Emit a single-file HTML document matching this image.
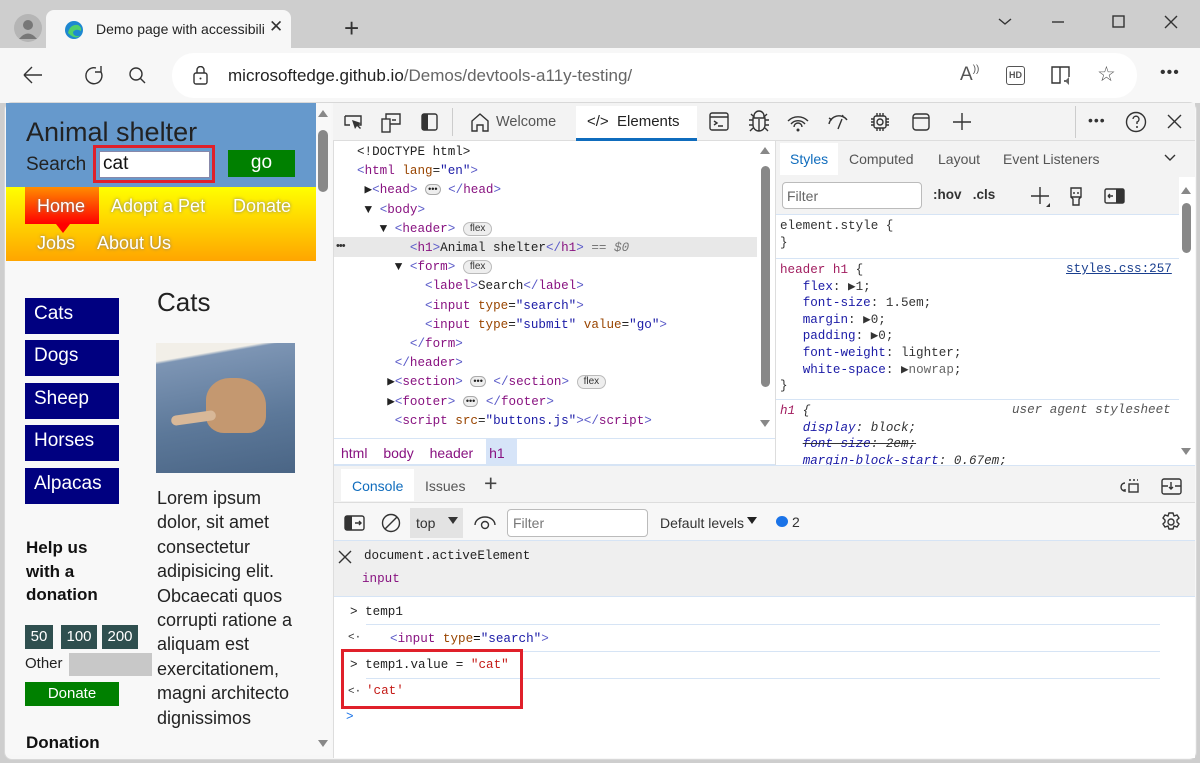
<!DOCTYPE html>
<html><head><meta charset="utf-8"><style>
*{box-sizing:border-box;margin:0;padding:0}
body{width:1200px;height:763px;overflow:hidden;background:#cecece;font-family:"Liberation Sans",sans-serif;position:relative}
.a{position:absolute}
.m{font-family:"Liberation Mono",monospace;font-size:12.6px;white-space:pre}
.tg{color:#881280}.an{color:#994500}.av{color:#1a1aa6}.br{color:#5a5ac8}
.pill{display:inline-block;border:1px solid #bbb;border-radius:8px;background:#eee;font-size:10px;padding:0 6px;line-height:12px;color:#333;vertical-align:1px;font-family:"Liberation Sans",sans-serif}
.dots{display:inline-block;border:1px solid #aaa;border-radius:6px;background:#eee;font-size:9px;line-height:9px;padding:0 2px;vertical-align:1px;font-family:"Liberation Sans",sans-serif}
.nav{color:#fff;font-size:18px;text-shadow:0 0 3px #777}
.side{left:19px;width:94px;height:36px;background:#000080;color:#fff;font-size:19px;padding:5px 9px}
.ic{stroke:#333;fill:none;stroke-width:1.4}
.sp{color:#1a1aa6}
</style></head><body>
<!-- title bar -->
<div class="a" style="left:14px;top:14px;width:28px;height:28px;border-radius:50%;background:#b5b5b5"></div>
<svg class="a" style="left:14px;top:14px" width="28" height="28"><circle cx="14" cy="11" r="5" fill="#777"/><path d="M5 25 Q14 14 23 25Z" fill="#777"/></svg>
<div class="a" style="left:46px;top:10px;width:245px;height:40px;background:#f7f7f7;border-radius:8px 8px 0 0"></div>
<svg class="a" style="left:64px;top:20px" width="20" height="20"><circle cx="10" cy="10" r="9" fill="#1e88d0"/><path d="M4 13 Q6 4 14 5 Q18 7 17 11 Q12 8 9 12 Q9 17 16 16 Q11 20 4 13Z" fill="#4fd06a"/></svg>
<div class="a" style="left:96px;top:21px;font-size:14px;color:#222;white-space:nowrap;width:168px;overflow:hidden">Demo page with accessibility issues</div>
<div class="a" style="left:269px;top:17px;font-size:17px;color:#333">✕</div>
<div class="a" style="left:344px;top:13px;font-size:26px;color:#333;font-weight:300">+</div>
<svg class="a" style="left:995px;top:12px" width="190" height="20"><path d="M4 7l6 5 6-5" class="ic"/><path d="M57 10h12" class="ic"/><rect x="118" y="4" width="11" height="11" class="ic"/><path d="M170 4l12 12M182 4l-12 12" class="ic"/></svg>
<!-- toolbar -->
<div class="a" style="left:0;top:48px;width:1200px;height:55px;background:#f7f7f7"></div>
<svg class="a" style="left:20px;top:62px" width="140" height="28"><path d="M4 13h18M4 13l8-8M4 13l8 8" class="ic" stroke-width="1.6"/><path d="M76 6a8 8 0 1 0 5 4M81 4v6h-6" class="ic" stroke-width="1.6"/><circle cx="116" cy="12" r="6" class="ic" stroke-width="1.6"/><path d="M120 16l5 5" class="ic" stroke-width="1.6"/></svg>
<div class="a" style="left:172px;top:53px;width:965px;height:45px;background:#fff;border-radius:22px"></div>
<svg class="a" style="left:192px;top:66px" width="18" height="20"><rect x="2" y="7" width="13" height="11" rx="2" class="ic"/><path d="M5 7V4a3.5 3.5 0 0 1 7 0v3" class="ic"/><circle cx="8.5" cy="12.5" r="1" fill="#333"/></svg>
<div class="a" style="left:228px;top:66px;font-size:17px;color:#222">microsoftedge.github.io<span style="color:#666">/Demos/devtools-a11y-testing/</span></div>
<div class="a" style="left:960px;top:64px;font-size:19px;color:#555">A<span style="font-size:10px;vertical-align:8px">))</span></div>
<div class="a" style="left:1006px;top:66px;width:19px;height:19px;border:1.5px solid #555;border-radius:3px;font-size:9px;font-weight:bold;color:#555;text-align:center;line-height:16px">HD</div>
<svg class="a" style="left:1050px;top:64px" width="24" height="22"><path d="M2 3h8v16H2zM10 3h9v10" class="ic" stroke="#666"/><path d="M14 16h2l3-3v8l-3-3h-2z" fill="#666"/></svg>
<div class="a" style="left:1097px;top:62px;font-size:21px;color:#555">☆</div>
<div class="a" style="left:1160px;top:64px;font-size:16px;color:#333;letter-spacing:1px">•••</div>
<!-- content frame -->
<div class="a" style="left:4px;top:102px;width:1193px;height:658px;background:#f7f7f7;border-radius:8px;border:1px solid #d8d8d8"></div>
<!-- webpage -->
<div class="a" style="left:6px;top:103px;width:310px;height:652px;background:#f8f8f8;overflow:hidden">
 <div class="a" style="left:0;top:0;width:310px;height:84px;background:#6699cc"></div>
 <div class="a" style="left:20px;top:14px;font-size:27px;color:#222;font-weight:300">Animal shelter</div>
 <div class="a" style="left:20px;top:51px;font-size:19px;color:#222">Search</div>
 <div class="a" style="left:87px;top:42px;width:122px;height:38px;border:3px solid #e0202a"></div>
 <div class="a" style="left:93px;top:48px;width:111px;height:27px;background:#fff;border:1px solid #88a;font-size:19px;padding:1px 3px;color:#111">cat</div>
 <div class="a" style="left:222px;top:47px;width:67px;height:27px;background:#008000;color:#fff;font-size:19px;text-align:center;line-height:25px">go</div>
 <div class="a" style="left:0;top:84px;width:310px;height:74px;background:linear-gradient(#ffff00,#ffa500)"></div>
 <div class="a" style="left:19px;top:84px;width:74px;height:37px;background:linear-gradient(#ff8c00,#ff0000)"></div>
 <div class="a" style="left:50px;top:121px;width:0;height:0;border-left:7px solid transparent;border-right:7px solid transparent;border-top:9px solid #ff0000"></div>
 <div class="a nav" style="left:31px;top:93px">Home</div>
 <div class="a nav" style="left:105px;top:93px">Adopt a Pet</div>
 <div class="a nav" style="left:227px;top:93px">Donate</div>
 <div class="a nav" style="left:31px;top:130px">Jobs</div>
 <div class="a nav" style="left:91px;top:130px">About Us</div>
 <div class="a" style="left:151px;top:184px;font-size:26px;color:#222;font-weight:300">Cats</div>
 <div class="a side" style="top:195px">Cats</div>
 <div class="a side" style="top:237px">Dogs</div>
 <div class="a side" style="top:280px">Sheep</div>
 <div class="a side" style="top:322px">Horses</div>
 <div class="a side" style="top:365px">Alpacas</div>
 <div class="a" style="left:150px;top:240px;width:139px;height:130px;background:linear-gradient(170deg,#f2efe8 0,#f2efe8 12%,#7d95b4 14%,#5c7899 60%,#4a6585)"></div>
 <div class="a" style="left:200px;top:275px;width:60px;height:55px;background:#c49870;border-radius:40% 50% 30% 30%"></div>
 <div class="a" style="left:165px;top:310px;width:45px;height:10px;background:#d8b898;border-radius:6px;transform:rotate(-8deg)"></div>
 <div class="a" style="left:151px;top:383px;font-size:18px;color:#222;line-height:24.4px;width:138px">Lorem ipsum dolor, sit amet consectetur adipisicing elit. Obcaecati quos corrupti ratione a aliquam est exercitationem, magni architecto dignissimos</div>
 <div class="a" style="left:20px;top:433px;font-size:17px;font-weight:bold;color:#111;line-height:23.5px">Help us<br>with a<br>donation</div>
 <div class="a" style="left:19px;top:522px;width:28px;height:24px;background:#2f4f4f;color:#fff;font-size:15px;text-align:center;line-height:24px">50</div>
 <div class="a" style="left:55px;top:522px;width:36px;height:24px;background:#2f4f4f;color:#fff;font-size:15px;text-align:center;line-height:24px">100</div>
 <div class="a" style="left:96px;top:522px;width:36px;height:24px;background:#2f4f4f;color:#fff;font-size:15px;text-align:center;line-height:24px">200</div>
 <div class="a" style="left:19px;top:552px;font-size:15px;color:#222">Other</div>
 <div class="a" style="left:63px;top:550px;width:83px;height:23px;background:#c8c8c8"></div>
 <div class="a" style="left:19px;top:579px;width:94px;height:24px;background:#008000;color:#fff;font-size:15px;text-align:center;line-height:24px">Donate</div>
 <div class="a" style="left:20px;top:630px;font-size:17px;font-weight:bold;color:#111">Donation</div>
</div>
<!-- page scrollbar -->
<div class="a" style="left:316px;top:103px;width:15px;height:652px;background:#f8f8f8"></div>
<div class="a" style="left:318px;top:130px;width:10px;height:62px;background:#888;border-radius:5px"></div>
<div class="a" style="left:318px;top:110px;border-left:5px solid transparent;border-right:5px solid transparent;border-bottom:7px solid #888"></div>
<div class="a" style="left:318px;top:740px;border-left:5px solid transparent;border-right:5px solid transparent;border-top:7px solid #888"></div>
<!-- devtools -->
<div class="a" style="left:333px;top:103px;width:862px;height:655px;background:#fff;border-left:1px solid #ddd"></div>
<div class="a" style="left:333px;top:103px;width:862px;height:38px;background:#f3f3f3;border-bottom:1px solid #ddd"></div>
<svg class="a" style="left:342px;top:110px" width="110" height="26"><path d="M3 6h16v9h-6M3 6v9h5" class="ic"/><path d="M10 10l3 9 2-3 3 3 1-1-3-3 3-2z" fill="#333"/><rect x="40" y="9" width="8" height="13" class="ic"/><path d="M44 9V4h14v10h-10M50 10h4" class="ic"/><rect x="80" y="4" width="15" height="16" rx="2" class="ic"/><rect x="80" y="4" width="6" height="16" fill="#333"/></svg>
<div class="a" style="left:452px;top:108px;width:1px;height:28px;background:#ccc"></div>
<svg class="a" style="left:469px;top:111px" width="22" height="22"><path d="M3 10L11 3l8 7v10h-5v-6H8v6H3z" class="ic" stroke-width="1.5"/></svg>
<div class="a" style="left:496px;top:114px;font-size:14.5px;color:#555">Welcome</div>
<div class="a" style="left:576px;top:106px;width:121px;height:35px;background:#fff;border-bottom:3px solid #0f6cbd"></div>
<div class="a" style="left:587px;top:113px;font-size:15px;color:#222">&lt;/&gt;&nbsp; Elements</div>
<svg class="a" style="left:708px;top:110px" width="270" height="24"><rect x="2" y="3" width="18" height="17" rx="2" class="ic"/><path d="M2 7h18M6 11l3 2-3 2M10 16h5" class="ic"/><path d="M46 6a5 5 0 0 1 10 0v2h-10zM45 8h12v7a6 6 0 0 1-12 0zM51 9v12M41 10h4M41 15h4M57 10h4M57 15h4M43 4l3 3M59 4l-3 3M42 21l3-3M60 21l-3-3" class="ic"/><path d="M80 11a14 14 0 0 1 20 0M83 14a9 9 0 0 1 14 0M86 17a4 4 0 0 1 8 0" class="ic"/><circle cx="90" cy="20" r="1.5" fill="#333"/><path d="M121 14a10 10 0 0 1 18-4M130 19l4-10M124 10l-3-2M134 7l1-2" class="ic"/><rect x="166" y="6" width="12" height="12" rx="2" class="ic"/><circle cx="172" cy="12" r="3" class="ic"/><path d="M169 3v3M172 3v3M175 3v3M169 18v3M172 18v3M175 18v3M163 9h3M163 12h3M163 15h3M178 9h3M178 12h3M178 15h3" class="ic"/><rect x="205" y="4" width="16" height="16" rx="3" class="ic"/><path d="M205 8h16" class="ic"/><path d="M254 3v17M245 12h18" class="ic"/></svg>
<div class="a" style="left:1075px;top:106px;width:1px;height:32px;background:#ccc"></div>
<div class="a" style="left:1088px;top:112px;font-size:14px;color:#333;letter-spacing:1px">•••</div>
<svg class="a" style="left:1124px;top:110px" width="64" height="24"><circle cx="12" cy="12" r="9.5" class="ic"/><path d="M9 9a3 3 0 1 1 4 3v2" class="ic"/><circle cx="13" cy="17" r="1" fill="#333"/><path d="M44 5l13 13M57 5L44 18" class="ic" stroke-width="1.6"/></svg>
<!-- elements tree -->
<div class="a" style="left:334px;top:237px;width:423px;height:20px;background:#e8e8e8"></div>
<div class="a m" style="left:357px;top:143px;line-height:19.2px;color:#222">&lt;!DOCTYPE html&gt;
<span class="br">&lt;</span><span class="tg">html</span> <span class="an">lang</span>=<span class="av">"en"</span><span class="br">&gt;</span>
 ▶<span class="br">&lt;</span><span class="tg">head</span><span class="br">&gt;</span> <span class="dots">•••</span> <span class="br">&lt;/</span><span class="tg">head</span><span class="br">&gt;</span>
 ▼ <span class="br">&lt;</span><span class="tg">body</span><span class="br">&gt;</span>
   ▼ <span class="br">&lt;</span><span class="tg">header</span><span class="br">&gt;</span> <span class="pill">flex</span>
       <span class="br">&lt;</span><span class="tg">h1</span><span class="br">&gt;</span>Animal shelter<span class="br">&lt;/</span><span class="tg">h1</span><span class="br">&gt;</span> <span style="color:#777">== <i>$0</i></span>
     ▼ <span class="br">&lt;</span><span class="tg">form</span><span class="br">&gt;</span> <span class="pill">flex</span>
         <span class="br">&lt;</span><span class="tg">label</span><span class="br">&gt;</span>Search<span class="br">&lt;/</span><span class="tg">label</span><span class="br">&gt;</span>
         <span class="br">&lt;</span><span class="tg">input</span> <span class="an">type</span>=<span class="av">"search"</span><span class="br">&gt;</span>
         <span class="br">&lt;</span><span class="tg">input</span> <span class="an">type</span>=<span class="av">"submit"</span> <span class="an">value</span>=<span class="av">"go"</span><span class="br">&gt;</span>
       <span class="br">&lt;/</span><span class="tg">form</span><span class="br">&gt;</span>
     <span class="br">&lt;/</span><span class="tg">header</span><span class="br">&gt;</span>
    ▶<span class="br">&lt;</span><span class="tg">section</span><span class="br">&gt;</span> <span class="dots">•••</span> <span class="br">&lt;/</span><span class="tg">section</span><span class="br">&gt;</span> <span class="pill">flex</span>
    ▶<span class="br">&lt;</span><span class="tg">footer</span><span class="br">&gt;</span> <span class="dots">•••</span> <span class="br">&lt;/</span><span class="tg">footer</span><span class="br">&gt;</span>
     <span class="br">&lt;</span><span class="tg">script</span> <span class="an">src</span>=<span class="av">"buttons.js"</span><span class="br">&gt;&lt;/</span><span class="tg">script</span><span class="br">&gt;</span></div>
<div class="a" style="left:336px;top:240px;font-size:11px;color:#333;letter-spacing:-1px">•••</div>
<div class="a" style="left:758px;top:141px;width:16px;height:297px;background:#fff"></div>
<div class="a" style="left:761px;top:166px;width:9px;height:221px;background:#888;border-radius:5px"></div>
<div class="a" style="left:760px;top:147px;border-left:5px solid transparent;border-right:5px solid transparent;border-bottom:7px solid #888"></div>
<div class="a" style="left:760px;top:420px;border-left:5px solid transparent;border-right:5px solid transparent;border-top:7px solid #888"></div>
<!-- breadcrumbs -->
<div class="a" style="left:334px;top:438px;width:441px;height:27px;background:#fff;border-top:1px solid #d6e4f5;border-bottom:1px solid #d6e4f5"></div>
<div class="a" style="left:486px;top:439px;width:31px;height:25px;background:#d6e4f8"></div>
<div class="a" style="left:341px;top:445px;font-size:14px;color:#881280;word-spacing:12px">html body header h1</div>
<div class="a" style="left:775px;top:141px;width:1px;height:324px;background:#ddd"></div>
<!-- styles pane -->
<div class="a" style="left:776px;top:141px;width:419px;height:36px;background:#f3f3f3"></div>
<div class="a" style="left:780px;top:143px;width:58px;height:32px;background:#fff"></div>
<div class="a" style="left:790px;top:151px;font-size:14px;color:#0f6cbd">Styles</div>
<div class="a" style="left:849px;top:151px;font-size:14px;color:#555">Computed</div>
<div class="a" style="left:938px;top:151px;font-size:14px;color:#555">Layout</div>
<div class="a" style="left:1003px;top:151px;font-size:14px;color:#555">Event Listeners</div>
<svg class="a" style="left:1163px;top:153px" width="14" height="10"><path d="M2 2l5 5 5-5" class="ic"/></svg>
<div class="a" style="left:776px;top:177px;width:403px;height:38px;background:#f3f3f3;border-bottom:1px solid #d6e4f5"></div>
<div class="a" style="left:782px;top:182px;width:140px;height:27px;background:#fff;border:1px solid #bbb;border-radius:4px;font-size:14px;color:#666;padding:5px 4px">Filter</div>
<div class="a" style="left:933px;top:187px;font-size:13.5px;font-weight:bold;color:#333">:hov&nbsp;&nbsp;&nbsp;.cls</div>
<svg class="a" style="left:1028px;top:184px" width="100" height="24"><path d="M12 3v17M3 12h18" class="ic"/><path d="M22 19l-4 4h4z" fill="#333"/><path d="M43 4h10v9h-10zM43 13l2 2v6h6v-6l2-2M46 8v2M50 8v2" class="ic"/><rect x="77" y="5" width="19" height="14" rx="1.5" class="ic"/><rect x="88" y="5" width="8" height="14" fill="#333"/><path d="M85 12h-5M80 12l2-2M80 12l2 2" class="ic"/></svg>
<div class="a m" style="left:780px;top:218px;line-height:16.5px;color:#333">element.style {
}</div>
<div class="a" style="left:776px;top:258px;width:403px;height:1px;background:#d6e4f5"></div>
<div class="a m" style="left:780px;top:262px;line-height:16.6px;color:#333"><span style="color:#a11d5f">header h1</span> {
   <span class="sp">flex</span>: ▶1;
   <span class="sp">font-size</span>: 1.5em;
   <span class="sp">margin</span>: ▶0;
   <span class="sp">padding</span>: ▶0;
   <span class="sp">font-weight</span>: lighter;
   <span class="sp">white-space</span>: ▶<span style="color:#666">nowrap</span>;
}</div>
<div class="a m" style="left:1066px;top:262px;color:#1a3f8f;text-decoration:underline">styles.css:257</div>
<div class="a" style="left:776px;top:399px;width:403px;height:1px;background:#d6e4f5"></div>
<div class="a" style="left:776px;top:400px;width:403px;height:65px;overflow:hidden">
<div class="a m" style="left:4px;top:3px;line-height:16.6px;color:#333;font-style:italic"><span style="color:#a11d5f">h1</span> {
   <span class="sp">display</span>: block;
   <s><span class="sp">font-size</span>: 2em;</s>
   <span class="sp">margin-block-start</span>: 0.67em;</div>
<div class="a m" style="left:236px;top:3px;color:#555;font-style:italic">user agent stylesheet</div></div>
<div class="a" style="left:1179px;top:177px;width:16px;height:288px;background:#fff"></div>
<div class="a" style="left:1182px;top:203px;width:9px;height:50px;background:#888;border-radius:5px"></div>
<div class="a" style="left:1181px;top:187px;border-left:5px solid transparent;border-right:5px solid transparent;border-bottom:7px solid #888"></div>
<div class="a" style="left:1181px;top:448px;border-left:5px solid transparent;border-right:5px solid transparent;border-top:7px solid #888"></div>
<!-- drawer -->
<div class="a" style="left:334px;top:465px;width:861px;height:38px;background:#f3f3f3;border-top:1px solid #d6e4f5;border-bottom:1px solid #ddd"></div>
<div class="a" style="left:341px;top:469px;width:73px;height:32px;background:#fff"></div>
<div class="a" style="left:352px;top:478px;font-size:14px;color:#0f6cbd">Console</div>
<div class="a" style="left:425px;top:478px;font-size:14px;color:#555">Issues</div>
<div class="a" style="left:484px;top:470px;font-size:23px;color:#444;font-weight:300">+</div>
<svg class="a" style="left:1118px;top:475px" width="70" height="22"><path d="M7 8a4 4 0 0 0 0 8" class="ic"/><path d="M5 15l2 1 0-2" class="ic"/><rect x="11" y="9" width="9" height="8" class="ic"/><path d="M11 5h2M15 5h2M19 5h1" class="ic"/><rect x="44" y="4" width="19" height="15" rx="2" class="ic"/><path d="M44 11h6M57 11h6M53 7v7M51 12l2 2 2-2" class="ic"/></svg>
<div class="a" style="left:334px;top:503px;width:861px;height:38px;background:#f7f7f7;border-bottom:1px solid #d6e4f5"></div>
<svg class="a" style="left:343px;top:512px" width="60" height="22"><rect x="2" y="4" width="19" height="14" rx="2" class="ic"/><rect x="2" y="4" width="7" height="14" fill="#333"/><path d="M12 11h6M16 9l2 2-2 2" class="ic"/><circle cx="48" cy="11" r="8.5" class="ic" stroke-width="1.6"/><path d="M42 17l12-12" class="ic" stroke-width="1.6"/></svg>
<div class="a" style="left:410px;top:508px;width:53px;height:30px;background:#e3e3e3"></div>
<div class="a" style="left:416px;top:515px;font-size:14px;color:#333">top</div>
<div class="a" style="left:448px;top:517px;border-left:5px solid transparent;border-right:5px solid transparent;border-top:7px solid #333"></div>
<svg class="a" style="left:473px;top:512px" width="24" height="20"><path d="M2 13a10 8 0 0 1 20 0" class="ic"/><circle cx="12" cy="13" r="3.5" class="ic"/></svg>
<div class="a" style="left:507px;top:509px;width:141px;height:28px;background:#fff;border:1px solid #bbb;border-radius:4px;font-size:14px;color:#777;padding:5px 5px">Filter</div>
<div class="a" style="left:660px;top:515px;font-size:14px;color:#333">Default levels</div>
<div class="a" style="left:747px;top:517px;border-left:5px solid transparent;border-right:5px solid transparent;border-top:7px solid #222"></div>
<div class="a" style="left:776px;top:516px;width:12px;height:11px;border-radius:50%;background:#1a73e8"></div>
<div class="a" style="left:792px;top:514px;font-size:14px;color:#333">2</div>
<svg class="a" style="left:1160px;top:511px" width="22" height="22"><circle cx="11" cy="11" r="3" class="ic"/><path d="M9 2h4l1 3 3-1 2 3-2 2 0 2 2 2-2 3-3-1-1 3H9l-1-3-3 1-2-3 2-2 0-2-2-2 2-3 3 1z" class="ic"/></svg>
<!-- console messages -->
<div class="a" style="left:334px;top:541px;width:861px;height:56px;background:#efefef;border-bottom:1px solid #d6e4f5"></div>
<svg class="a" style="left:337px;top:549px" width="16" height="16"><path d="M2 2l12 12M14 2L2 14" class="ic" stroke-width="1.5"/></svg>
<div class="a m" style="left:364px;top:549px;color:#222">document.activeElement</div>
<div class="a m" style="left:362px;top:572px;color:#881280">input</div>
<div class="a m" style="left:350px;top:605px;color:#222">&gt; temp1</div>
<div class="a" style="left:366px;top:624px;width:794px;height:1px;background:#d6e4f5"></div>
<div class="a m" style="left:348px;top:632px;color:#333;font-size:11px">&lt;·</div>
<div class="a m" style="left:390px;top:632px"><span class="br">&lt;</span><span class="tg">input</span> <span class="an">type</span>=<span class="av">"search"</span><span class="br">&gt;</span></div>
<div class="a" style="left:366px;top:651px;width:794px;height:1px;background:#d6e4f5"></div>
<div class="a m" style="left:350px;top:658px;color:#222">&gt; temp1.value = <span style="color:#c41a16">"cat"</span></div>
<div class="a" style="left:366px;top:678px;width:794px;height:1px;background:#d6e4f5"></div>
<div class="a m" style="left:348px;top:686px;color:#333;font-size:11px">&lt;·</div>
<div class="a m" style="left:366px;top:684px;color:#c41a16">'cat'</div>
<div class="a" style="left:341px;top:649px;width:182px;height:60px;border:3px solid #e0202a"></div>
<div class="a m" style="left:346px;top:710px;color:#1a73e8">&gt;</div>
</body></html>
